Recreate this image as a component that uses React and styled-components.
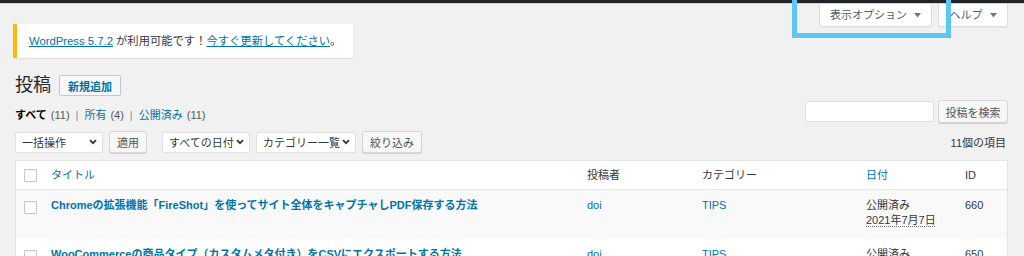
import React from "react";
import styled, { createGlobalStyle } from "styled-components";

const GlobalStyle = createGlobalStyle`
  body {
    margin: 0;
    background: #f1f1f1;
    font-family: "Liberation Sans", "Noto Sans CJK JP", sans-serif;
    font-size: 11px;
    color: #32373c;
    overflow: hidden;
  }
`;

const AdminBar = styled.div`
  height: 3px;
  background: #1f2428;
  border-bottom: 1px solid #cfd1d3;
`;

const MetaLinks = styled.div`
  display: flex;
  justify-content: flex-end;
  gap: 6px;
  height: 20px;
  padding-right: 16px;
`;

const MetaTab = styled.div`
  position: relative;
  display: flex;
  align-items: center;
  justify-content: center;
  gap: 7px;
  width: ${(p) => p.$width}px;
  height: 23px;
  box-sizing: border-box;
  background: #fff;
  border: 1px solid #dcdee0;
  border-top: none;
  border-radius: 0 0 3px 3px;
  box-shadow: 0 1px 1px rgba(0, 0, 0, 0.04);
  color: #555d66;
  font-size: 11px;
  line-height: 14px;
`;

const Highlight = styled.div`
  position: absolute;
  left: -28px;
  right: -20px;
  top: -10px;
  bottom: -12px;
  border: 5px solid #5cc6f5;
  z-index: 2;
  pointer-events: none;
`;

const Notice = styled.div`
  width: 340px;
  height: 34px;
  margin-left: 13px;
  background: #fff;
  border-left: 4px solid #ffb900;
  box-shadow: 0 1px 1px rgba(0, 0, 0, 0.06);
  display: flex;
  align-items: center;
  padding-left: 12px;
  box-sizing: border-box;
  color: #32373c;
  font-size: 11.3px;
  line-height: 14px;
  white-space: nowrap;
`;

const Link = styled.a`
  color: #0073aa;
  text-decoration: ${(p) => (p.$underline ? "underline" : "none")};
  font-weight: ${(p) => (p.$bold ? 700 : 400)};
`;

const Wrap = styled.div`
  padding: 0 16px 0 15px;
`;

const TitleRow = styled.div`
  display: flex;
  align-items: center;
  gap: 8px;
  margin-top: 17px;
  height: 21px;
`;

const Heading = styled.h1`
  margin: 0;
  font-size: 18px;
  font-weight: 400;
  line-height: 21px;
  color: #23282d;
`;

const AddButton = styled.span`
  display: inline-flex;
  align-items: center;
  height: 21px;
  box-sizing: border-box;
  padding: 0 8px;
  border: 1px solid #b9cbd9;
  border-radius: 2px;
  background: #f6f7f8;
  color: #0071a1;
  font-weight: 700;
  font-size: 11px;
`;

const FilterRow = styled.div`
  display: flex;
  justify-content: space-between;
  align-items: flex-end;
  margin-top: 4px;
`;

const SubNav = styled.div`
  display: flex;
  align-items: center;
  gap: 4px;
  line-height: 14px;
  padding-bottom: 1px;
`;

const Current = styled.span`
  font-weight: 700;
  color: #000;
`;

const Count = styled.span`
  color: #50575e;
`;

const Sep = styled.span`
  color: #8c8f94;
  margin: 0 2px;
`;

const SearchBox = styled.div`
  display: flex;
  align-items: center;
  gap: 4px;
`;

const Input = styled.div`
  width: 129px;
  height: 21px;
  box-sizing: border-box;
  background: #fff;
  border: 1px solid #dddfe1;
  border-radius: 2px;
`;

const Button = styled.span`
  display: inline-flex;
  align-items: center;
  justify-content: center;
  width: ${(p) => p.$width}px;
  height: ${(p) => p.$height || 22}px;
  box-sizing: border-box;
  background: #f7f7f7;
  border: 1px solid #d7d7d7;
  border-radius: 3px;
  box-shadow: 0 1px 0 #d0d0d0;
  color: #555;
  font-size: 11px;
  white-space: nowrap;
`;

const TableNav = styled.div`
  display: flex;
  align-items: center;
  margin-top: 8px;
  height: 22px;
`;

const Actions = styled.div`
  display: flex;
  align-items: center;
  gap: ${(p) => p.$gap}px;
  margin-right: ${(p) => p.$after || 0}px;
`;

const Select = styled.div`
  display: flex;
  align-items: center;
  justify-content: space-between;
  width: ${(p) => p.$width}px;
  height: 21px;
  box-sizing: border-box;
  padding: 0 5px 0 6px;
  background: #fff;
  border: 1px solid #e0e0e0;
  border-radius: 2px;
  color: #32373c;
  font-size: 11px;
  white-space: nowrap;
`;

const ItemCount = styled.div`
  margin-left: auto;
  margin-right: 2px;
  color: #32373c;
`;

const Table = styled.div`
  margin-top: 7px;
  background: #fff;
  border: 1px solid #e2e4e7;
  box-shadow: 0 1px 1px rgba(0, 0, 0, 0.04);
`;

const Row = styled.div`
  display: grid;
  grid-template-columns: 35px 1fr 115px 164px 99px 42px;
  height: ${(p) => p.$height}px;
  align-items: ${(p) => (p.$head ? "center" : "start")};
  background: ${(p) => (p.$striped ? "#f9f9f9" : "#fff")};
  border-bottom: ${(p) => (p.$head ? "1px solid #e2e4e7" : "none")};
  box-sizing: border-box;
  line-height: 15px;
`;

const Cell = styled.div`
  padding-top: ${(p) => (p.$head ? 0 : 8)}px;
  color: ${(p) => (p.$link ? "#0073aa" : "#32373c")};
  font-weight: ${(p) => (p.$bold ? 700 : 400)};
  white-space: nowrap;
`;

const CheckCell = styled.div`
  padding: ${(p) => (p.$head ? "1px 0 0 8px" : "11px 0 0 8px")};
`;

const Checkbox = styled.div`
  width: 13px;
  height: 13px;
  box-sizing: border-box;
  background: #fff;
  border: 1px solid #c5c8cb;
  border-radius: 1px;
  box-shadow: inset 0 1px 2px rgba(0, 0, 0, 0.06);
`;

const DateText = styled.span`
  text-decoration: underline dotted #777;
  text-underline-offset: 2px;
`;

const Caret = () => (
  <svg width="7" height="5" viewBox="0 0 7 5">
    <path d="M0 0 H7 L3.5 4.5 Z" fill="#72777c" />
  </svg>
);

const Chevron = () => (
  <svg width="8" height="6" viewBox="0 0 8 6">
    <path d="M1 1.2 L4 4.2 L7 1.2" stroke="#32373c" strokeWidth="1.8" fill="none" />
  </svg>
);

const posts = [
  {
    id: 660,
    title: "Chromeの拡張機能「FireShot」を使ってサイト全体をキャプチャしPDF保存する方法",
    date: "2021年7月7日",
  },
  {
    id: 650,
    title: "WooCommerceの商品タイプ（カスタムメタ付き）をCSVにエクスポートする方法",
    date: "2021年6月28日",
  },
];

const App = () => {
  return (
    <>
      <GlobalStyle />
      <AdminBar />
      <MetaLinks>
        <MetaTab $width={113}>
          表示オプション <Caret />
          <Highlight />
        </MetaTab>
        <MetaTab $width={70}>
          ヘルプ <Caret />
        </MetaTab>
      </MetaLinks>
      <Notice>
        <Link $underline>WordPress 5.7.2</Link>
        &nbsp;が利用可能です！<Link $underline>今すぐ更新してください</Link>。
      </Notice>
      <Wrap>
        <TitleRow>
          <Heading>投稿</Heading>
          <AddButton>新規追加</AddButton>
        </TitleRow>
        <FilterRow>
          <SubNav>
            <Current>すべて</Current>
            <Count>(11)</Count>
            <Sep>|</Sep>
            <Link>所有</Link>
            <Count>(4)</Count>
            <Sep>|</Sep>
            <Link>公開済み</Link>
            <Count>(11)</Count>
          </SubNav>
          <SearchBox>
            <Input />
            <Button $width={70} $height={23}>投稿を検索</Button>
          </SearchBox>
        </FilterRow>
        <TableNav>
          <Actions $gap={6} $after={15}>
            <Select $width={88}>
              一括操作 <Chevron />
            </Select>
            <Button $width={38}>適用</Button>
          </Actions>
          <Actions $gap={6}>
            <Select $width={88}>
              すべての日付 <Chevron />
            </Select>
            <Select $width={100}>
              カテゴリー一覧 <Chevron />
            </Select>
            <Button $width={60}>絞り込み</Button>
          </Actions>
          <ItemCount>11個の項目</ItemCount>
        </TableNav>
        <Table>
          <Row $head $height={29}>
            <CheckCell $head>
              <Checkbox />
            </CheckCell>
            <Cell $head $link>タイトル</Cell>
            <Cell $head>投稿者</Cell>
            <Cell $head>カテゴリー</Cell>
            <Cell $head $link>日付</Cell>
            <Cell $head>ID</Cell>
          </Row>
          {posts.map((post, i) => (
            <Row key={post.id} $height={49} $striped={i % 2 === 0}>
              <CheckCell>
                <Checkbox />
              </CheckCell>
              <Cell $link $bold>{post.title}</Cell>
              <Cell $link>doi</Cell>
              <Cell $link>TIPS</Cell>
              <Cell>
                公開済み
                <br />
                <DateText>{post.date}</DateText>
              </Cell>
              <Cell>{post.id}</Cell>
            </Row>
          ))}
        </Table>
      </Wrap>
    </>
  );
};

export default App;
